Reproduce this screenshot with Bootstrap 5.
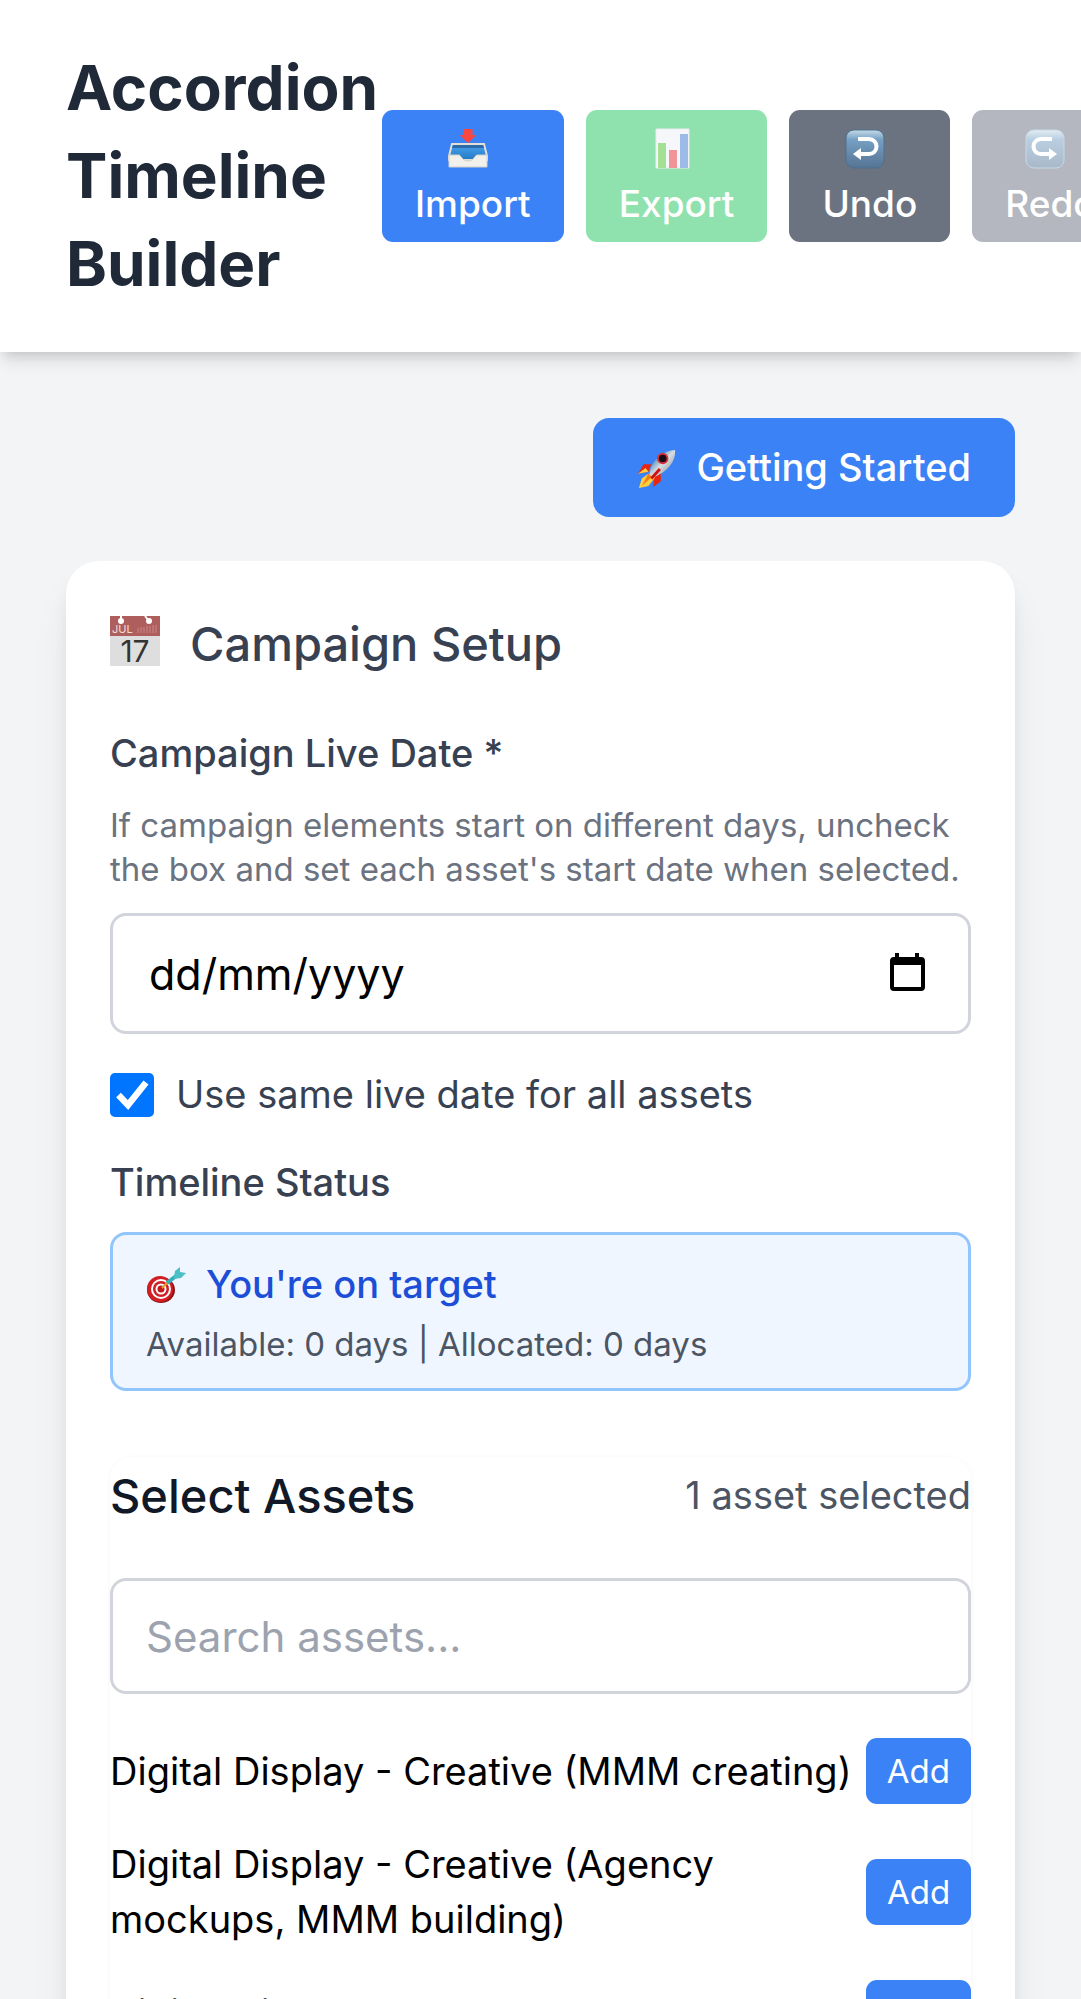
<!DOCTYPE html>
<html lang="en">
<head>
<meta charset="utf-8">
<meta name="viewport" content="width=device-width, initial-scale=1">
<title>Accordion Timeline Builder</title>
<link href="https://cdn.jsdelivr.net/npm/bootstrap@5.3.0/dist/css/bootstrap.min.css" rel="stylesheet">
<style>
:root{--blue:#3b82f6;--line:#d1d5db}
body{font-family:Inter,"Liberation Sans",sans-serif;background:#f3f4f6;color:#000;font-size:38px;line-height:55px;overflow-x:hidden}
.site-head{background:#fff;padding:44px 66px;box-shadow:0 11px 16px -3px rgba(0,0,0,.12),0 5px 11px -5px rgba(0,0,0,.12);position:relative}
.site-title{flex:0 0 316px;font-size:62px;line-height:88px;font-weight:700;color:#1f2937}
.tools{gap:22px}
.tool{border:0;border-radius:11px;padding:11px 33px;color:#fff;background:var(--blue);font-size:37px;line-height:55px;font-weight:500;text-align:center}
.tool svg{display:block;width:54px;height:44px;margin:5px auto 6px}
.tool-green{background:#22c55e}
.tool-gray{background:#6b7280}
.tool:disabled{opacity:.5}
.page{padding:66px}
.start{border:0;border-radius:16px;background:var(--blue);color:#fff;font-weight:500;padding:22px 44px;gap:19px;line-height:55px}
.panel{background:#fff;border-radius:33px;padding:44px;margin-top:44px;box-shadow:0 28px 42px -8px rgba(0,0,0,.1),0 11px 17px -6px rgba(0,0,0,.1)}
.panel-title{font-size:47px;line-height:77px;font-weight:500;color:#374151;gap:28px;margin-bottom:44px}
.field-label{font-size:38px;line-height:55px;font-weight:500;color:#374151;display:block;margin-bottom:22px}
.hint{font-size:33px;line-height:44px;color:#6b7280;margin-bottom:22px}
.box-input{display:block;width:100%;border:3px solid var(--line);border-radius:16px;background:#fff;padding:22px 33px;font-size:42px;line-height:66px;height:116px;color:#000}
.box-input::placeholder{color:#9ca3af;opacity:1}
.date-wrap{position:relative}
.date-wrap .box-input{height:121px;padding-left:36px;font-size:43px}
.date-wrap svg{position:absolute;right:35px;top:36px;width:54px;height:48px;pointer-events:none}
.same-date{gap:22px;margin:33px 0;color:#374151}
.tick{appearance:none;width:44px;height:44px;border-radius:5px;background:#0075ff url("data:image/svg+xml,%3Csvg xmlns='http://www.w3.org/2000/svg' viewBox='0 0 44 44'%3E%3Cpath d='M8.500 22l9.500 10L36 9.500' fill='none' stroke='%23fff' stroke-width='6.500'/%3E%3C/svg%3E");flex:none}
.status{background:#eff6ff;border:3px solid #93c5fd;border-radius:16px;padding:22px 33px;color:#4b5563;font-size:33px;line-height:44px}
.status-head{color:#1d4ed8;font-weight:500;font-size:38px;line-height:55px;gap:20px;margin-bottom:10px}
.assets{margin-top:66px;border-radius:22px;box-shadow:0 1px 5px rgba(0,0,0,.05)}
.assets-head{margin-bottom:44px}
.assets-title{font-size:47px;line-height:77px;font-weight:500;color:#111827}
.count{color:#4b5563}
.asset-list{gap:33px;margin-top:44px}
.asset-row{gap:11px}
.add{border:0;border-radius:11px;background:var(--blue);color:#fff;font-size:33px;line-height:44px;padding:11px 21px;min-width:105px}
</style>
<script src="https://cdn.jsdelivr.net/npm/bootstrap@5.3.0/dist/js/bootstrap.bundle.min.js"></script>
</head>
<body>
<header class="site-head d-flex align-items-center">
  <h1 class="site-title mb-0">Accordion Timeline Builder</h1>
  <div class="tools d-flex flex-shrink-0">
    <button class="tool" type="button">
      <svg viewBox="0 0 54 44" aria-hidden="true"><defs><linearGradient id="tray" x2="0" y2="1"><stop stop-color="#4ba3ef"/><stop offset="1" stop-color="#2379c4"/></linearGradient></defs><path d="M6 18h32l3 12v4H3v-4z" fill="url(#tray)" stroke="#e4dfd6" stroke-width="2"/><path d="M7 19h30l1 3H6z" fill="#2b6ca8"/><path d="M3 29h10c2 0 3 6 9 6s7-6 9-6h10v12H3z" fill="#f2f0ec" stroke="#d4d0ca"/><path d="M17.500 3h9v6h4L22 17l-8.500-8h4z" fill="#f8483f"/></svg>Import</button>
    <button class="tool tool-green" type="button" disabled>
      <svg viewBox="0 0 54 44" aria-hidden="true"><path d="M6 3h33v39H6z" fill="#eef1f8" stroke="#d5d8dc"/><path d="M8 17h8v25H8z" fill="#48c52c"/><path d="M19 24h8v18h-8z" fill="#e22b34"/><path d="M30 8h8v34h-8z" fill="#3e79d2"/></svg>Export</button>
    <button class="tool tool-gray" type="button">
      <svg viewBox="0 0 54 44" aria-hidden="true"><defs><linearGradient id="key" x2="0" y2="1"><stop stop-color="#c6dbe8"/><stop offset=".25" stop-color="#76a0c4"/><stop offset="1" stop-color="#557493"/></linearGradient></defs><rect x="3" y="4" width="38" height="38" rx="8" fill="url(#key)" stroke="#4e718e"/><path d="M15 13h11a7.500 7.500 0 0 1 0 15h-9" fill="none" stroke="#fff" stroke-width="4"/><path d="M10 28l8-6v12z" fill="#fff"/></svg>Undo</button>
    <button class="tool tool-gray" type="button" disabled>
      <svg viewBox="0 0 54 44" aria-hidden="true"><rect x="3" y="4" width="38" height="38" rx="8" fill="url(#key)" stroke="#8fb4cf"/><path d="M29 13H18a7.500 7.500 0 0 0 0 15h9" fill="none" stroke="#fff" stroke-width="4"/><path d="M34 28l-8-6v12z" fill="#fff"/></svg>Redo</button>
  </div>
</header>
<main class="page">
  <div class="d-flex justify-content-end">
    <button class="start d-flex align-items-center" type="button">
      <svg width="40" height="42" viewBox="0 0 42 42" aria-hidden="true"><defs><linearGradient id="hull" x1="0" y1="0" x2="1" y2="1"><stop offset=".2" stop-color="#3d7fae"/><stop offset=".5" stop-color="#d7dde2"/><stop offset="1" stop-color="#777d83"/></linearGradient></defs><path d="M15 17L7 17 1 27l11-2zM25 26v9l-8 6 1-10z" fill="#e9250e"/><path d="M1 27l8-6 3 4zM12 27l7 4-7 9-10 2 3-10z" fill="#ffcf3e"/><path d="M12 27l4 3-11 10z" fill="#f47b17"/><path d="M13 28c1-13 12-25 27-26 1 13-9 23-23 29z" fill="url(#hull)"/><path d="M15 32l9-10" stroke="#d41111" stroke-width="3"/><circle cx="27" cy="11" r="6" fill="#d5323a"/><circle cx="27" cy="11" r="4" fill="#170b15"/></svg>
      <span>Getting Started</span></button>
  </div>
  <section class="panel">
    <h2 class="panel-title d-flex align-items-center">
      <svg width="52" height="58" viewBox="0 0 52 58" aria-hidden="true"><path d="M0 3h50v48H0z" fill="#dedede"/><path d="M0 1h50v20H0z" fill="#ad5e5d"/><circle cx="11" cy="6" r="3" fill="#fff"/><circle cx="39" cy="6" r="3" fill="#fff"/><path d="M11 1v5M35 1l4 5" stroke="#fff" stroke-width="2"/><path d="M28 18v-5m3 5v-6m3 6v-6m3 6v-7m3 7v-7m3 7v-8m3 8v-8" stroke="#c98a89"/><text x="2" y="18" font-size="11" font-weight="400" fill="#f3dcdc">JUL</text><text x="25" y="47" font-size="30" font-weight="400" text-anchor="middle" fill="#333">17</text></svg>
      <span>Campaign Setup</span></h2>
    <label class="field-label" for="live">Campaign Live Date *</label>
    <p class="hint">If campaign elements start on different days, uncheck the box and set each asset's start date when selected.</p>
    <div class="date-wrap">
      <input class="box-input" id="live" type="text" value="dd/mm/yyyy">
      <svg viewBox="0 0 54 48" aria-hidden="true"><path d="M13 4h4v4h16V4h4v4h2q4 0 4 4v26q0 4-4 4H12q-4 0-4-4V12q0-4 4-4h1z"/><path d="M12 16h27v22H12z" fill="#fff"/></svg>
    </div>
    <div class="same-date d-flex align-items-center">
      <input class="tick" type="checkbox" id="same" checked>
      <label for="same">Use same live date for all assets</label>
    </div>
    <h3 class="field-label">Timeline Status</h3>
    <div class="status">
      <div class="status-head d-flex align-items-center">
        <svg width="40" height="40" viewBox="0 0 40 40" aria-hidden="true"><ellipse cx="15" cy="25" rx="14" ry="13" fill="#8f1416"/><circle cx="14" cy="24" r="13" fill="#d21d24"/><circle cx="15" cy="24" r="10" fill="#fff"/><circle cx="15" cy="24" r="8" fill="#d21d24"/><circle cx="15" cy="24" r="5.500" fill="#fff"/><circle cx="15" cy="24" r="3.500" fill="#c2181e"/><path d="M16 23l6-6" stroke="#e0a52c" stroke-width="2"/><path d="M21 18l9-7" stroke="#37aeb8" stroke-width="4"/><path d="M28 12l1-6 5-4v5l6 1-5 5-7 1z" fill="#4cc0c6"/></svg>
        <span>You're on target</span></div>
      <div>Available: 0 days | Allocated: 0 days</div>
    </div>
    <section class="assets">
      <div class="assets-head d-flex align-items-center justify-content-between">
        <h2 class="assets-title mb-0">Select Assets</h2>
        <span class="count">1 asset selected</span>
      </div>
      <input class="box-input" type="search" placeholder="Search assets..." aria-label="Search assets">
      <div class="asset-list d-flex flex-column">
        <div class="asset-row d-flex align-items-center justify-content-between"><span>Digital Display - Creative (MMM creating)</span><button class="add" type="button">Add</button></div>
        <div class="asset-row d-flex align-items-center justify-content-between"><span>Digital Display - Creative (Agency mockups, MMM building)</span><button class="add" type="button">Add</button></div>
        <div class="asset-row d-flex align-items-center justify-content-between"><span>Digital Display</span><button class="add" type="button">Add</button></div>
      </div>
    </section>
  </section>
</main>
</body>
</html>
